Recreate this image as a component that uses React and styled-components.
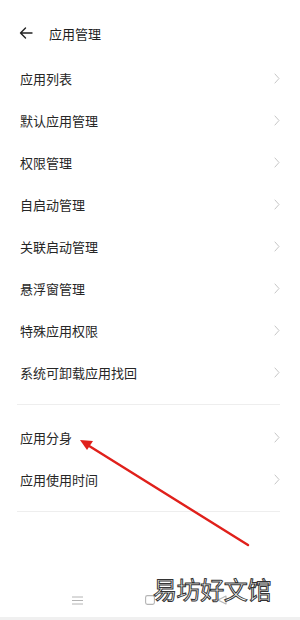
import React from 'react';
import styled, { createGlobalStyle } from 'styled-components';

const GlobalStyle = createGlobalStyle`
  html, body {
    margin: 0;
    padding: 0;
    background: #ffffff;
  }
  body {
    font-family: "Noto Sans CJK SC", "Noto Sans", sans-serif;
  }
`;

const Screen = styled.div`
  position: relative;
  width: 300px;
  height: 620px;
  overflow: hidden;
  background: #fff;
  display: flex;
  flex-direction: column;
`;

const Header = styled.div`
  display: flex;
  align-items: center;
  height: 48px;
  margin-top: 9px;
  padding-left: 19px;
  gap: 16px;
`;

const Title = styled.div`
  font-size: 13px;
  color: #1f1f1f;
`;

const Row = styled.div`
  display: flex;
  align-items: center;
  justify-content: space-between;
  height: 42px;
  padding: 0 20px 0 20px;
`;

const Label = styled.span`
  font-size: 13px;
  color: #262626;
`;

const Divider = styled.div`
  height: 1px;
  margin: 11px 20px 11px 17px;
  background: #eeeeee;
`;

const NavBar = styled.div`
  margin-top: auto;
  display: flex;
  justify-content: center;
  align-items: center;
  gap: 62px;
  height: 30px;
  margin-bottom: 2px;
  padding-right: 2px;
`;

const BottomStrip = styled.div`
  height: 3px;
  background: #f0f0f0;
`;

const Watermark = styled.div`
  position: absolute;
  left: 153px;
  top: 571px;
  font-size: 24px;
  letter-spacing: -0.4px;
  color: #fff;
  -webkit-text-stroke: 1px #333;
  font-family: "Noto Sans CJK SC", sans-serif;
`;

const ArrowLayer = styled.svg`
  position: absolute;
  left: 0;
  top: 0;
  pointer-events: none;
`;

const Back = () => (
  <svg width="14" height="12" viewBox="0 0 14 12">
    <path d="M13 6H1.5M6.5 1L1.5 6l5 5" fill="none" stroke="#222" strokeWidth="1.4" strokeLinecap="round" strokeLinejoin="round" />
  </svg>
);

const Chevron = () => (
  <svg width="6" height="11" viewBox="0 0 6 11">
    <path d="M0.7 0.7L5 5.5L0.7 10.3" fill="none" stroke="#c6c6c6" strokeWidth="1" />
  </svg>
);

const items = ['应用列表', '默认应用管理', '权限管理', '自启动管理', '关联启动管理', '悬浮窗管理', '特殊应用权限', '系统可卸载应用找回'];
const items2 = ['应用分身', '应用使用时间'];

export default function App() {
  return (
    <>
      <GlobalStyle />
      <Screen>
        <Header>
          <Back />
          <Title>应用管理</Title>
        </Header>
        {items.map((t) => (
          <Row key={t}>
            <Label>{t}</Label>
            <Chevron />
          </Row>
        ))}
        <Divider />
        {items2.map((t) => (
          <Row key={t}>
            <Label>{t}</Label>
            <Chevron />
          </Row>
        ))}
        <Divider />
        <NavBar>
          <svg width="11" height="9" viewBox="0 0 11 9">
            <path d="M0 1h11M0 4.5h11M0 8h11" stroke="#b4b4b4" strokeWidth="1" />
          </svg>
          <svg width="10" height="10" viewBox="0 0 10 10">
            <rect x="0.6" y="0.6" width="8.8" height="8.8" rx="1.8" fill="none" stroke="#b4b4b4" strokeWidth="1.1" />
          </svg>
          <svg width="10" height="10" viewBox="0 0 10 10">
            <path d="M9 1L1 5l8 4z" fill="none" stroke="#b4b4b4" strokeWidth="1.1" strokeLinejoin="round" />
          </svg>
        </NavBar>
        <BottomStrip />
        <Watermark>易坊好文馆</Watermark>
        <ArrowLayer width="300" height="620" viewBox="0 0 300 620">
          <path d="M248 545L86 444" stroke="#e0201b" strokeWidth="2.4" strokeLinecap="round" />
          <path d="M80 440L93 441L87 450z" fill="#e0201b" />
        </ArrowLayer>
      </Screen>
    </>
  );
}
